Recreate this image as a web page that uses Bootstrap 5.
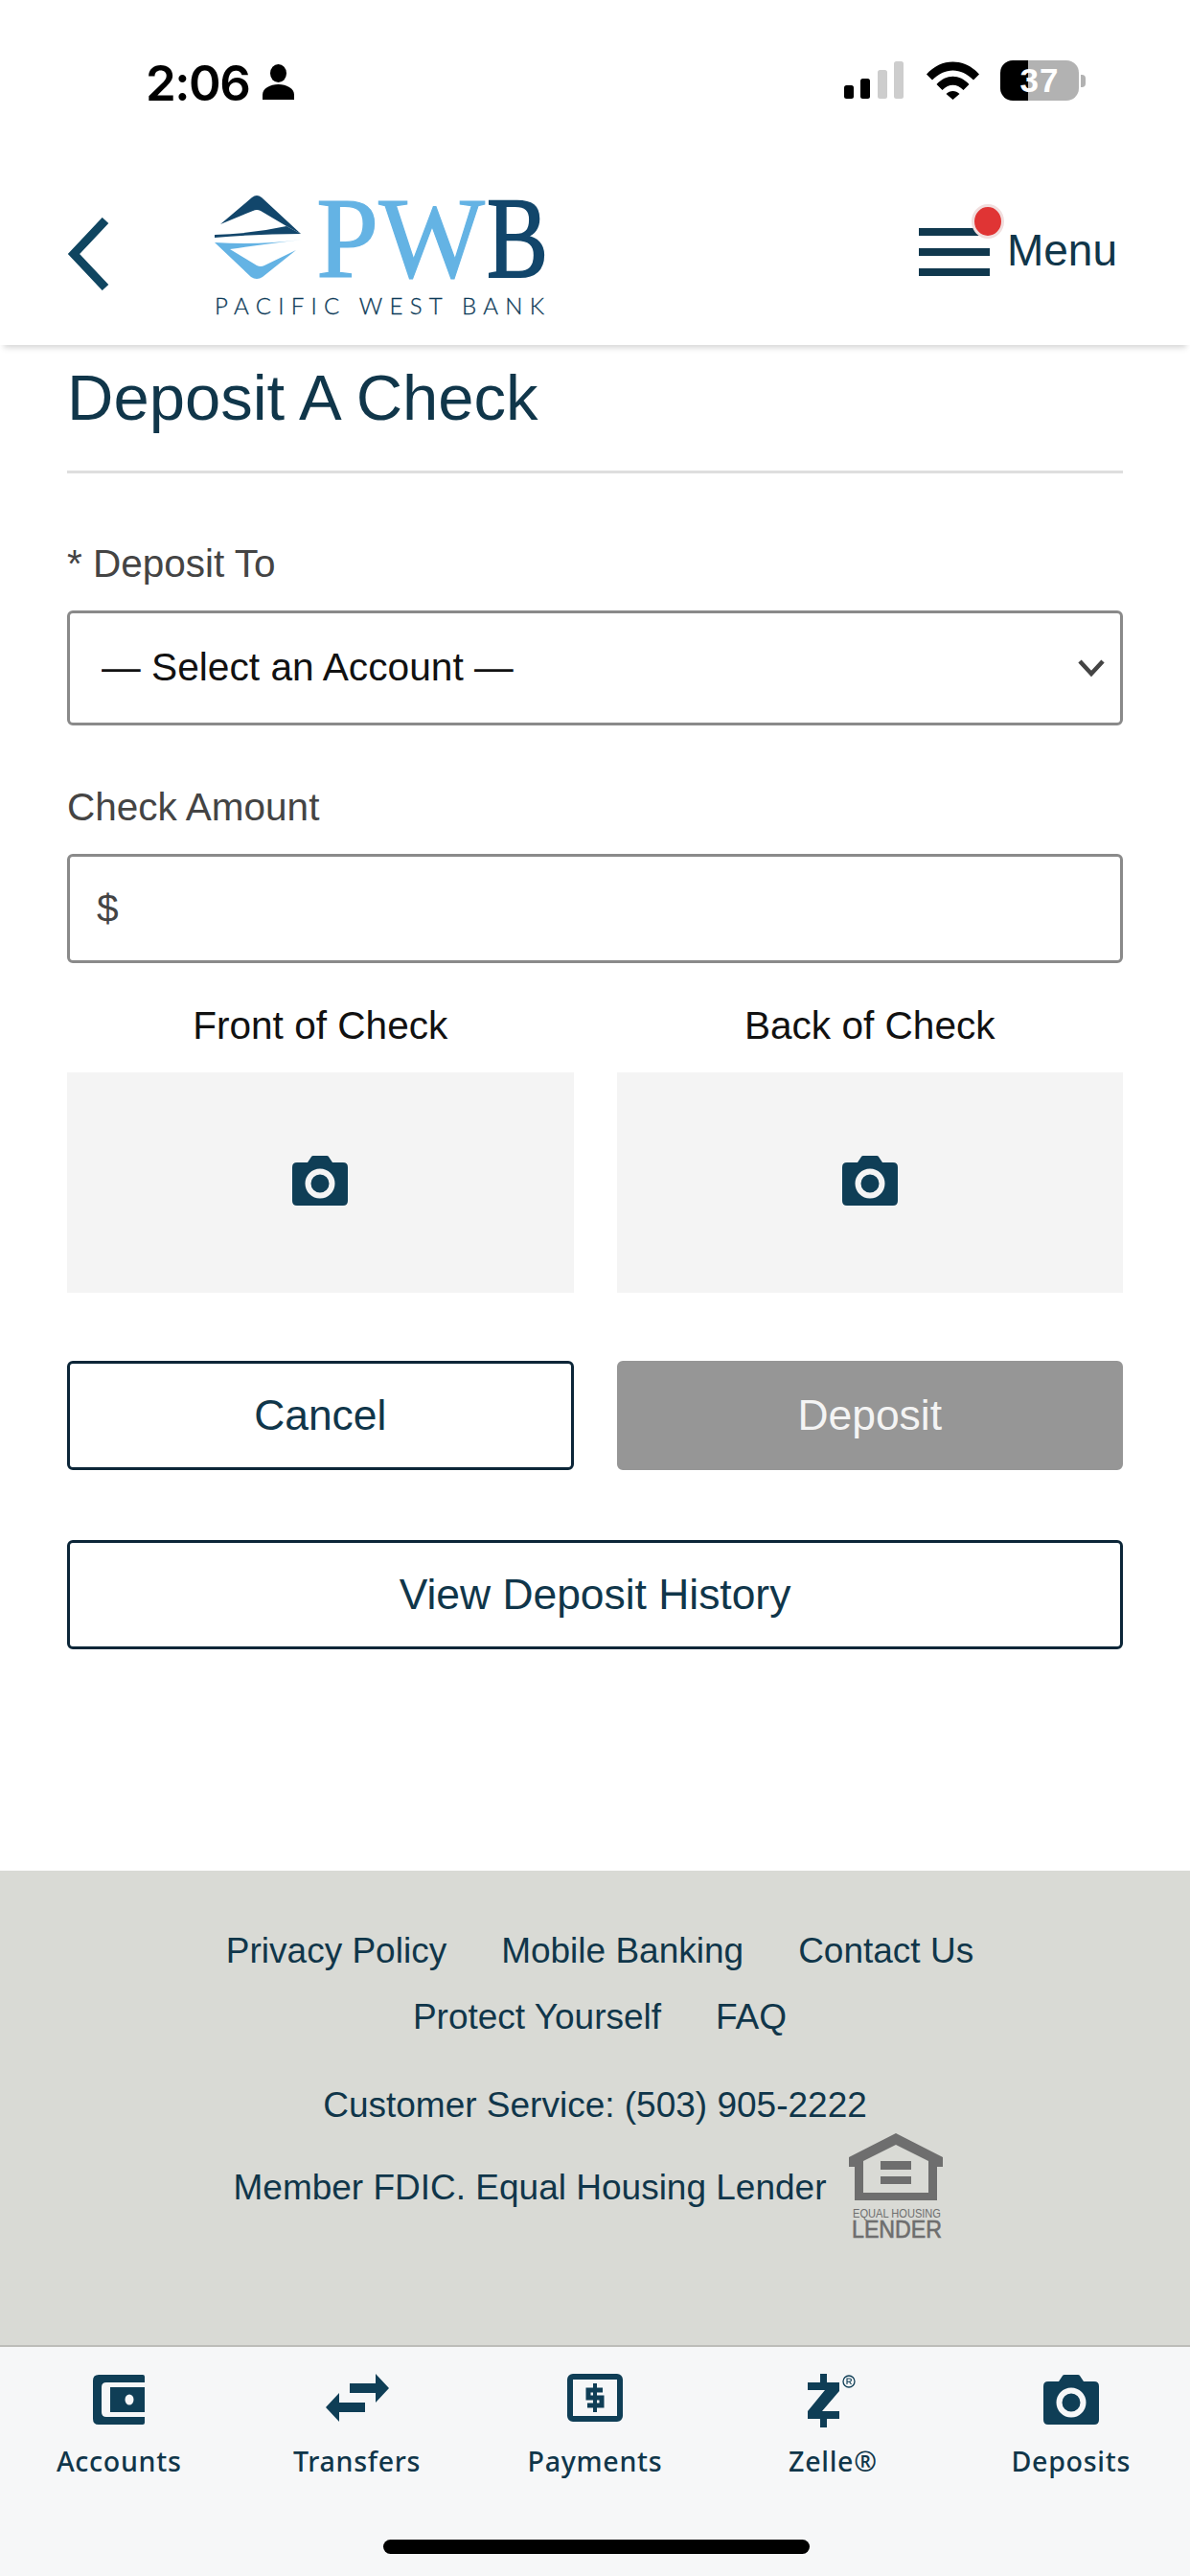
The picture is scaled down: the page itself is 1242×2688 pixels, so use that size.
<!DOCTYPE html>
<html lang="en">
<head>
<meta charset="utf-8">
<title>Deposit A Check</title>
<link href="https://cdn.jsdelivr.net/npm/bootstrap@5.3.0/dist/css/bootstrap.min.css" rel="stylesheet">
<style>
html,body{margin:0;padding:0;background:#fff}
body{width:1242px;height:2688px;font-family:"Liberation Sans",Arial,sans-serif;color:#10364a;overflow:hidden}
.app-shell{height:2688px}
.status-row{height:170px;padding:61px 109px 0 152px;align-items:flex-start}
.clock{font-family:Inter,"Liberation Sans",sans-serif;font-weight:600;font-size:51px;line-height:1;color:#000;letter-spacing:-1.5px}
.person-ico{margin-left:14px;margin-top:6px}
.sig-ico,.wifi-ico{margin-top:3px}
.batt-wrap{margin-left:22px;margin-top:2px}
.batt-body{width:82px;height:42px;border-radius:13px;background:linear-gradient(90deg,#000 0,#000 29px,#b2b2b2 29px,#b2b2b2 100%);color:#fff;font-weight:700;font-size:35px;line-height:42px;text-align:center;letter-spacing:1px}
.batt-nub{width:5px;height:13px;background:#b2b2b2;border-radius:0 4px 4px 0;margin-left:2px}
.top-nav{height:190px;padding:0 76px 0 70px;box-shadow:0 7px 6px -4px rgba(0,0,0,.16);position:relative;z-index:2;background:#fff}
.logo-svg{margin-left:108px;margin-bottom:16px;margin-right:-24px}
.menu-wrap{position:relative;gap:18px}
.menu-dot{position:absolute;left:55px;top:-30px;width:34px;height:36px;border-radius:50%;background:#e03434;border:3px solid #f1dede}
.menu-bars{width:74px;margin-top:-5px}
.menu-bars span{display:block;height:8px;background:#10384e;margin-bottom:13px}
.menu-bars span:last-child{margin-bottom:0}
.menu-word{font-size:46px;line-height:1;color:#10364a;margin-top:-8px}
.page-body{height:1592px;padding:22px 70px 0}
.page-title{font-size:67px;line-height:66px;font-weight:400;color:#10364a;margin:0;padding-bottom:43px;border-bottom:3px solid #dedede}
.fld-label{display:block;font-size:40.5px;line-height:46px;color:#444;margin:0}
.first-label{margin-top:71px}
.amount-label{margin-top:62px}
.fld-select,.fld-input{border:3px solid #8a8a8a;border-radius:6px;font-family:"Liberation Sans",Arial,sans-serif;font-size:40.7px;box-shadow:none}
.fld-select{height:120px;margin-top:26px;color:#111;padding:0 60px 0 33px;background-position:right 14px center;background-size:32px 22px;background-image:url("data:image/svg+xml,%3csvg xmlns='http://www.w3.org/2000/svg' viewBox='0 0 32 22'%3e%3cpath fill='none' stroke='%23444' stroke-width='4.5' d='M4 4l12 13L28 4'/%3e%3c/svg%3e")}
.fld-input{height:114px;margin-top:26px;color:#444;padding:0 28px}
.pic-row{--bs-gutter-x:45px;margin-top:42px}
.pic-title{font-size:40.6px;line-height:46px;color:#111;text-align:center}
.pic-box{height:230px;background:#f4f4f4;margin-top:26px}
.act-row{--bs-gutter-x:45px;margin-top:71px}
.act-btn{height:114px;width:100%;font-size:44.4px;border-radius:6px;line-height:1;padding:0;color:#10364a;background:#fff;border:3px solid #0c2638}
.act-btn.off{background:#969696;border-color:#969696;color:#f4f4f4;opacity:1}
.hist-btn{margin-top:73px}
.foot-area{height:495px;background:#d9dad5;padding-top:61px;font-size:37px;line-height:46px;color:#10364a}
.foot-links{gap:0 57px;padding-left:10px}
.foot-links a{color:#10364a;text-decoration:none}
.foot-links+.foot-links{margin-top:23px}
.svc-line{margin-top:46px;text-align:center}
.member-line{gap:22px;margin-top:3px;padding-right:14px}
.member-line svg{margin-right:-30px}
.tab-bar{height:241px;background:#f6f7f8;border-top:2px solid #bdbdb9;padding-top:28px;position:relative}
.tab-item{width:248.4px;height:112px;font-family:"Noto Sans",sans-serif;font-size:28.6px;line-height:36px;font-weight:500;color:#10364a;letter-spacing:.7px;text-decoration:none;text-align:center}
.tab-ico{height:56px;margin-bottom:17px}
.home-ind{position:absolute;left:400px;top:201px;width:445px;height:15px;border-radius:8px;background:#000}
</style>
</head>
<body>
<div class="app-shell d-flex flex-column">
  <header>
    <div class="status-row d-flex justify-content-between">
      <div class="d-flex align-items-start">
        <span class="clock">2:06</span>
        <svg class="person-ico" width="33" height="37" viewBox="0 0 33 37" aria-hidden="true"><ellipse cx="16.5" cy="9.5" rx="8.5" ry="9.5" fill="#000"/><path d="M0 37v-5c0-7 8-11 16.500-11S33 25 33 32v5z" fill="#000"/></svg>
      </div>
      <div class="d-flex align-items-start">
        <svg class="sig-ico" width="62" height="40" viewBox="0 0 62 40" aria-hidden="true"><rect x="0" y="25" width="10" height="14" rx="2.500" fill="#000"/><rect x="17" y="18" width="10" height="21" rx="2.500" fill="#000"/><rect x="35" y="9" width="10" height="30" rx="2.500" fill="#cdcdcd"/><rect x="52" y="0" width="10" height="39" rx="2.500" fill="#cdcdcd"/></svg>
        <svg class="wifi-ico ms-4" width="55" height="40" viewBox="0 0 55 40" aria-hidden="true"><path d="M0 13.500C15-4 40-4 55 13.500l-6 6C36 6 19 6 6 19.500z" fill="#000"/><path d="M10.500 24c10-11 24-11 34 0l-6 6c-7-7-15-7-22 0z" fill="#000"/><path d="M20.500 34c4-4 10-4 14 0l-7 6z" fill="#000"/></svg>
        <div class="batt-wrap d-flex align-items-center">
          <div class="batt-body">37</div>
          <div class="batt-nub"></div>
        </div>
      </div>
    </div>
    <nav class="top-nav d-flex align-items-center justify-content-between">
      <div class="d-flex align-items-center">
        <svg width="44" height="76" viewBox="0 0 44 76" aria-label="Back"><path d="M40 3 7 38l33 35" fill="none" stroke="#0f4560" stroke-width="9"/></svg>
        <svg class="logo-svg" width="376" height="160" viewBox="222 176 376 160" aria-label="Pacific West Bank">
          <path d="M230 233 263 205Q268 201 273 205L314 243 299 235 272 219Q268 217 264 219Z" fill="#12466b"/>
          <path d="M224 244Q262 243 299 235L314 243Q270 243 224 247Z" fill="#12466b"/>
          <path d="M224 252Q270 255 315 249Q275 254 240 259L268 276Q272 278 276 276L309 260 274 288Q268 292 262 288Z" fill="#64b3e4"/>
          <text x="330" y="288" font-family="Liberation Serif" font-size="120" fill="#64b3e4" stroke="#64b3e4" stroke-width="1.200" textLength="176" lengthAdjust="spacingAndGlyphs">PW</text>
          <text x="508" y="288" font-family="Liberation Serif" font-size="120" fill="#12466b" stroke="#12466b" stroke-width="2" textLength="64" lengthAdjust="spacingAndGlyphs">B</text>
          <text x="224" y="327" font-family="Lato" font-weight="300" font-size="24" fill="#0c3a58" stroke="#0c3a58" stroke-width=".3" textLength="344">PACIFIC WEST BANK</text>
        </svg>
      </div>
      <div class="menu-wrap d-flex align-items-center">
        <div class="menu-bars"><span></span><span></span><span></span></div>
        <span class="menu-dot"></span>
        <span class="menu-word">Menu</span>
      </div>
    </nav>
  </header>

  <main class="page-body">
    <h1 class="page-title">Deposit A Check</h1>
    <label class="fld-label first-label" for="acct">* Deposit To</label>
    <select id="acct" class="form-select fld-select"><option>— Select an Account —</option></select>
    <label class="fld-label amount-label" for="amt">Check Amount</label>
    <input id="amt" class="form-control fld-input" value="$">
    <div class="row pic-row">
      <div class="col-6">
        <div class="pic-title">Front of Check</div>
        <div class="pic-box d-flex align-items-center justify-content-center">
          <svg class="mb-1" width="58" height="52" viewBox="0 0 58 52" aria-hidden="true"><path d="M5 7h11l4-6q.5-1 2-1h14q1.500 0 2 1l4 6h11q5 0 5 5v35q0 5-5 5H5q-5 0-5-5V12q0-5 5-5z" fill="#0f3e56"/><circle cx="29" cy="29" r="12.500" fill="none" stroke="#f4f4f4" stroke-width="6"/></svg>
        </div>
      </div>
      <div class="col-6">
        <div class="pic-title">Back of Check</div>
        <div class="pic-box d-flex align-items-center justify-content-center">
          <svg class="mb-1" width="58" height="52" viewBox="0 0 58 52" aria-hidden="true"><path d="M5 7h11l4-6q.5-1 2-1h14q1.500 0 2 1l4 6h11q5 0 5 5v35q0 5-5 5H5q-5 0-5-5V12q0-5 5-5z" fill="#0f3e56"/><circle cx="29" cy="29" r="12.500" fill="none" stroke="#f4f4f4" stroke-width="6"/></svg>
        </div>
      </div>
    </div>
    <div class="row act-row">
      <div class="col-6"><button type="button" class="btn act-btn">Cancel</button></div>
      <div class="col-6"><button type="button" class="btn act-btn off" disabled>Deposit</button></div>
    </div>
    <button type="button" class="btn act-btn hist-btn">View Deposit History</button>
  </main>

  <footer class="foot-area">
    <div class="foot-links d-flex justify-content-center"><a href="#">Privacy Policy</a><a href="#">Mobile Banking</a><a href="#">Contact Us</a></div>
    <div class="foot-links d-flex justify-content-center"><a href="#">Protect Yourself</a><a href="#">FAQ</a></div>
    <div class="svc-line">Customer Service: (503) 905-2222</div>
    <div class="member-line d-flex justify-content-center align-items-center">
      <span>Member FDIC. Equal Housing Lender</span>
      <svg width="130" height="120" viewBox="885 2224 130 120" aria-label="Equal Housing Lender">
        <path fill-rule="evenodd" d="M935 2227 984 2252V2262H978V2297H892V2262H886V2252ZM935 2239 901 2256V2289H969V2256ZM919 2256H951V2265H919ZM919 2272H951V2280H919Z" fill="#6e6e6e"/>
        <text x="890" y="2315" font-family="Liberation Sans" font-size="13.500" fill="#6e6e6e" textLength="92" lengthAdjust="spacingAndGlyphs">EQUAL HOUSING</text>
        <text x="889" y="2336" font-family="Liberation Sans" font-size="25" fill="#6e6e6e" stroke="#6e6e6e" stroke-width=".6" textLength="94" lengthAdjust="spacingAndGlyphs">LENDER</text>
      </svg>
    </div>
  </footer>

  <nav class="tab-bar d-flex">
    <a class="tab-item d-block" href="#"><div class="tab-ico"><svg width="54" height="54" viewBox="0 0 54 54" aria-hidden="true"><path d="M6 1h46q2 0 2 2v6H14q-5 0-5 5v26q0 5 5 5h40v6q0 2-2 2H6q-6 0-6-6V7q0-6 6-6z" fill="#0f3e56"/><path d="M18 14h36v26H18z" fill="#0f3e56"/><ellipse cx="38" cy="27" rx="4.500" ry="5.500" fill="#f6f7f8"/></svg></div>Accounts</a>
    <a class="tab-item d-block" href="#"><div class="tab-ico"><svg width="66" height="50" viewBox="0 0 66 50" aria-hidden="true"><path d="M25 10h27V0l14 15-14 15V20H25z" fill="#0f3e56"/><path d="M41 30H14V20L0 35l14 15V40h27z" fill="#0f3e56"/></svg></div>Transfers</a>
    <a class="tab-item d-block" href="#"><div class="tab-ico"><svg width="58" height="50" viewBox="0 0 58 50" aria-hidden="true"><rect x="3" y="3" width="52" height="44" rx="3" fill="none" stroke="#0f3e56" stroke-width="6"/><path d="M29 10v30" stroke="#0f3e56" stroke-width="4" fill="none"/><path d="M37 17H22v8h14v8H21" stroke="#0f3e56" stroke-width="5" fill="none"/></svg></div>Payments</a>
    <a class="tab-item d-block" href="#"><div class="tab-ico"><svg width="52" height="56" viewBox="0 0 52 56" aria-hidden="true"><path d="M13 0h7v9h13v9L15 39h18v8H20v9h-7v-9H0v-8l18-22H0V9h13z" fill="#0f3e56"/><circle cx="43" cy="8" r="6" fill="none" stroke="#0f3e56" stroke-width="1.300"/><path d="M41 11V5h2.500q2 0 2 1.600t-2 1.600H41M43.500 8.200 45.500 11" fill="none" stroke="#0f3e56" stroke-width="1.100"/></svg></div>Zelle®</a>
    <a class="tab-item d-block" href="#"><div class="tab-ico"><svg width="58" height="54" viewBox="0 0 58 52" aria-hidden="true"><path d="M5 7h11l4-6q.5-1 2-1h14q1.500 0 2 1l4 6h11q5 0 5 5v35q0 5-5 5H5q-5 0-5-5V12q0-5 5-5z" fill="#0f3e56"/><circle cx="29" cy="29" r="12.500" fill="none" stroke="#f6f7f8" stroke-width="6"/></svg></div>Deposits</a>
    <div class="home-ind"></div>
  </nav>
</div>
<script src="https://cdn.jsdelivr.net/npm/bootstrap@5.3.0/dist/js/bootstrap.bundle.min.js"></script>
</body>
</html>
